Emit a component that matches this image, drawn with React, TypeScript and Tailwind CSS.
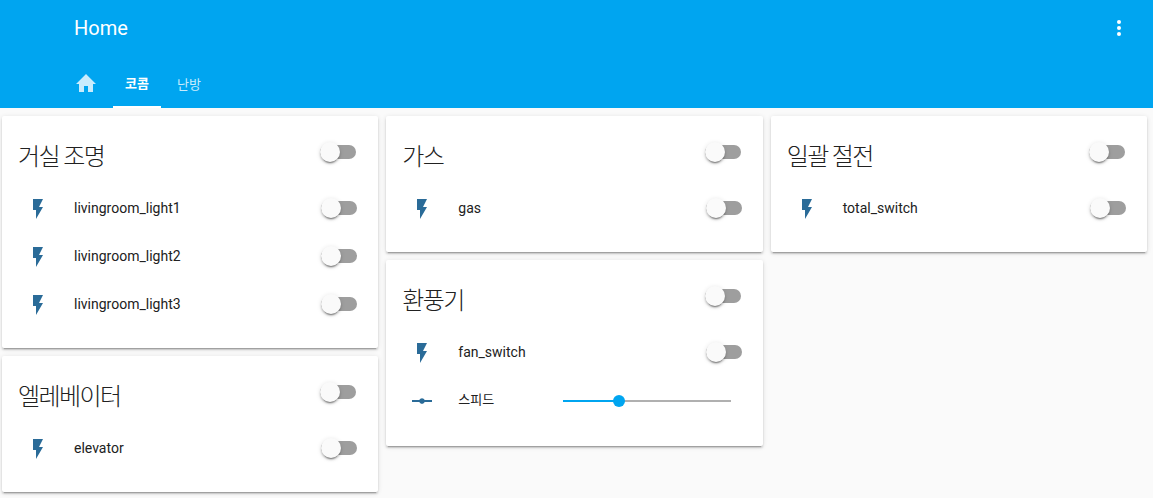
function Flash() {
  return (
    <svg viewBox="0 0 24 24" className="w-6 h-6 mt-[2px] fill-[#2a6b98] shrink-0">
      <path d="M7,2V13H10V22L17,10H13L17,2H7Z" />
    </svg>
  );
}

function Vertex() {
  return (
    <svg viewBox="0 0 24 24" className="w-6 h-6 fill-[#2a6b98] shrink-0">
      <path d="M2 11H9.4C9.8 9.9 10.8 9.2 12 9.2S14.2 9.9 14.6 11H22V13H14.6C14.2 14.1 13.2 14.8 12 14.8S9.8 14.1 9.4 13H2V11Z" />
    </svg>
  );
}

function Toggle({ head }: { head?: boolean }) {
  return (
    <div className={head ? "relative w-[36px] h-[14px] -mt-[10px] mr-[22px]" : "relative w-[36px] h-[14px] mr-[21px]"}>
      <div className="absolute inset-0 rounded-full bg-[#9e9e9e]" />
      <div className="absolute left-0 top-[-3px] w-[20px] h-[20px] rounded-full bg-[#fafafa] shadow-[0_2px_2px_0_rgba(0,0,0,0.2),0_1px_5px_0_rgba(0,0,0,0.12),0_3px_1px_-2px_rgba(0,0,0,0.3)]" />
    </div>
  );
}

function Row({ name }: { name: string }) {
  return (
    <div className="flex items-center h-12 pl-6">
      <Flash />
      <div className="flex-1 ml-6 text-[14px] text-[#212121]">{name}</div>
      <Toggle />
    </div>
  );
}

function Card({ title, rows, children }: { title: string; rows: string[]; children?: React.ReactNode }) {
  return (
    <div className="bg-white rounded-[2px] pb-5 shadow-[0_2px_2px_0_rgba(0,0,0,0.14),0_1px_5px_0_rgba(0,0,0,0.12),0_3px_1px_-2px_rgba(0,0,0,0.2)]">
      <div className="flex items-center justify-between h-[68px] pl-4 pt-[14px]">
        <div className="text-[24px] font-light tracking-[-1.6px] leading-8 text-[#212121]">{title}</div>
        <Toggle head />
      </div>
      {rows.map((r) => (
        <Row key={r} name={r} />
      ))}
      {children}
    </div>
  );
}

export default function App() {
  return (
    <div className="min-h-[498px] bg-[#fafafa] overflow-hidden" style={{ fontFamily: 'Roboto, "Noto Sans CJK KR", sans-serif' }}>
      <header className="bg-[#00a5f0] h-[108px] text-white">
        <div className="flex items-center justify-between h-14 pl-[74px] pr-[32px]">
          <div className="text-[20px]">Home</div>
          <div className="flex flex-col gap-[2px]">
            <span className="w-1 h-1 rounded-full bg-white" />
            <span className="w-1 h-1 rounded-full bg-white" />
            <span className="w-1 h-1 rounded-full bg-white" />
          </div>
        </div>
        <nav className="flex gap-[4px] mt-1 h-12 pl-[62px]">
          <div className="flex items-center justify-center w-[47px] pb-[1px]">
            <svg viewBox="0 0 24 24" className="w-6 h-6 fill-[#c9ecfd]">
              <path d="M10,20V14H14V20H19V12H22L12,2L2,12H5V20H10Z" />
            </svg>
          </div>
          <div className="flex items-center justify-center w-[48px] text-[13px] font-bold border-b-2 border-white pt-[2px]">코콤</div>
          <div className="flex items-center justify-center w-[48px] text-[13px] text-[#c9ecfd] pt-[2px]">난방</div>
        </nav>
      </header>
      <main className="flex items-start gap-2 pl-[2px] pr-[6px] pt-2">
        <div className="flex-1 flex flex-col gap-2">
          <Card title="거실 조명" rows={["livingroom_light1", "livingroom_light2", "livingroom_light3"]} />
          <Card title="엘레베이터" rows={["elevator"]} />
        </div>
        <div className="flex-1 flex flex-col gap-2">
          <Card title="가스" rows={["gas"]} />
          <Card title="환풍기" rows={["fan_switch"]}>
            <div className="flex items-center h-[50px] pl-6">
              <Vertex />
              <div className="w-[105px] ml-6 pb-[2px] text-[13px] text-[#212121]">스피드</div>
              <div className="relative w-[168px] h-[2px] bg-[#b0b0b0]">
                <div className="w-[56px] h-full bg-[#00a5f0]" />
                <div className="absolute left-[50px] top-[-5px] w-3 h-3 rounded-full bg-[#00a5f0]" />
              </div>
            </div>
          </Card>
        </div>
        <div className="flex-1 flex flex-col gap-2">
          <Card title="일괄 절전" rows={["total_switch"]} />
        </div>
      </main>
    </div>
  );
}
